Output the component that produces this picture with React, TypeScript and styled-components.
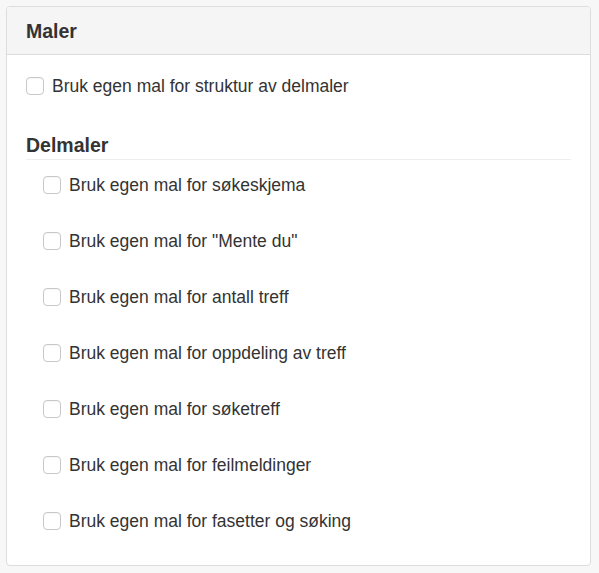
import styled, { createGlobalStyle } from "styled-components";

const GlobalStyle = createGlobalStyle`
  html, body {
    margin: 0;
    padding: 0;
    background: #f7f7f7;
  }
  body {
    font-family: "Liberation Sans", Arial, Helvetica, sans-serif;
    color: #333;
  }
`;

const Page = styled.div`
  padding: 6px 8px 7px 6px;
`;

const Panel = styled.section`
  width: 585px;
  height: 560px;
  box-sizing: border-box;
  background: #fff;
  border: 1px solid #ddd;
  border-radius: 4px;
  overflow: hidden;
  display: flex;
  flex-direction: column;
`;

const PanelHeader = styled.header`
  height: 48px;
  box-sizing: border-box;
  padding: 0 19px;
  background: #f5f5f5;
  border-bottom: 1px solid #ddd;
  display: flex;
  align-items: center;
`;

const PanelTitle = styled.h3`
  margin: 0;
  font-size: 19.5px;
  line-height: 24px;
  font-weight: bold;
  color: #333;
`;

const PanelBody = styled.div`
  padding: 21px 19px 20px 19px;
`;

const SectionTitle = styled.h4`
  margin: 37px 0 0;
  padding-bottom: 2px;
  font-size: 19.5px;
  line-height: 24px;
  font-weight: bold;
  color: #333;
  border-bottom: 1px solid #eee;
`;

const SubList = styled.div`
  display: flex;
  flex-direction: column;
  gap: 36px;
  margin-top: 15px;
  padding-left: 17px;
`;

const CheckRow = styled.label`
  display: flex;
  align-items: center;
  gap: 8px;
  height: 20px;
  font-size: 17.5px;
  color: #333;
  cursor: pointer;
`;

const Box = styled.input.attrs({ type: "checkbox" })`
  appearance: none;
  margin: 0;
  width: 18px;
  height: 18px;
  box-sizing: border-box;
  border: 1px solid #c8c8c8;
  border-radius: 4px;
  background: #fff;
  box-shadow: inset 0 1px 1px rgba(0, 0, 0, 0.04);
  flex-shrink: 0;
`;

const subTemplates = [
  "søkeskjema",
  '"Mente du"',
  "antall treff",
  "oppdeling av treff",
  "søketreff",
  "feilmeldinger",
  "fasetter og søking",
];

export default function App() {
  return (
    <>
      <GlobalStyle />
      <Page>
        <Panel>
          <PanelHeader>
            <PanelTitle>Maler</PanelTitle>
          </PanelHeader>
          <PanelBody>
            <CheckRow>
              <Box />
              <span>Bruk egen mal for struktur av delmaler</span>
            </CheckRow>
            <SectionTitle>Delmaler</SectionTitle>
            <SubList>
              {subTemplates.map((name) => (
                <CheckRow key={name}>
                  <Box />
                  <span>Bruk egen mal for {name}</span>
                </CheckRow>
              ))}
            </SubList>
          </PanelBody>
        </Panel>
      </Page>
    </>
  );
}
